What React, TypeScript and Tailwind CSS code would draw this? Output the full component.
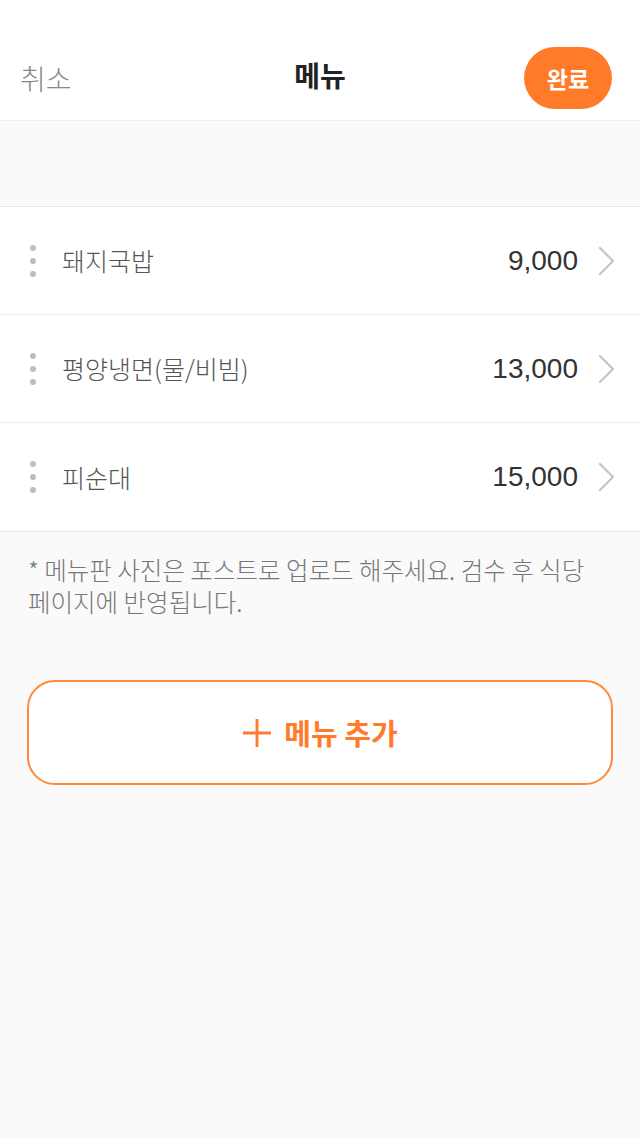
import React from "react";

const items = [
  { name: "돼지국밥", price: "9,000" },
  { name: "평양냉면(물/비빔)", price: "13,000" },
  { name: "피순대", price: "15,000" },
];

function Chevron() {
  return (
    <svg width="18" height="30" viewBox="0 0 18 30" fill="none">
      <path d="M2 2 L15 15 L2 28" stroke="#c4c4c4" strokeWidth="2.2" strokeLinecap="round" strokeLinejoin="round" />
    </svg>
  );
}

export default function App() {
  return (
    <div
      className="w-[640px] min-h-[1138px] bg-[#fafafa] flex flex-col"
      style={{ fontFamily: '"Noto Sans CJK KR", "Noto Sans", sans-serif' }}
    >
      <header className="h-[121px] bg-white border-b border-[#ececec] flex items-center pt-[36px] px-[20px] relative">
        <span className="text-[28px] text-[#888888] leading-none font-light">취소</span>
        <span className="absolute left-1/2 -translate-x-1/2 top-[61px] text-[28px] font-bold text-[#222222] leading-none">메뉴</span>
        <button className="ml-auto w-[88px] h-[62px] rounded-full bg-[#ff7b2a] text-white text-[23px] font-bold flex items-center justify-center mr-[8px]">
          완료
        </button>
      </header>
      <div className="h-[85px]" />
      <div className="bg-white border-t border-b border-[#e6e6e6]">
        {items.map((it, i) => (
          <div
            key={it.name}
            className={`h-[108px] flex items-center ${i < items.length - 1 ? "border-b border-[#ececec]" : ""}`}
          >
            <div className="w-[62px] flex flex-col items-center gap-[7px] pl-[4px]">
              <span className="w-[6px] h-[6px] rounded-full bg-[#bdbdbd]" />
              <span className="w-[6px] h-[6px] rounded-full bg-[#bdbdbd]" />
              <span className="w-[6px] h-[6px] rounded-full bg-[#bdbdbd]" />
            </div>
            <span className="text-[25px] text-[#555555] leading-none font-light">{it.name}</span>
            <span
              className="ml-auto text-[28px] text-[#333333] leading-none"
              style={{ fontFamily: '"Liberation Sans", "Noto Sans", sans-serif' }}
            >
              {it.price}
            </span>
            <div className="w-[62px] flex justify-start pl-[20px]">
              <Chevron />
            </div>
          </div>
        ))}
      </div>
      <p className="px-[28px] pt-[22px] text-[24.5px] leading-[32px] text-[#777777] font-light break-keep">
        * 메뉴판 사진은 포스트로 업로드 해주세요. 검수 후 식당 페이지에 반영됩니다.
      </p>
      <div className="px-[27px] pt-[62px]">
        <button className="w-full h-[105px] rounded-[28px] border-2 border-[#ff8a3d] bg-white flex items-center justify-center gap-[12px] text-[#ff7b2a]">
          <svg width="30" height="30" viewBox="0 0 30 30">
            <path d="M15 1 V29 M1 15 H29" stroke="#ff7b2a" strokeWidth="2.8" />
          </svg>
          <span className="text-[29px] font-bold leading-none">메뉴 추가</span>
        </button>
      </div>
    </div>
  );
}
